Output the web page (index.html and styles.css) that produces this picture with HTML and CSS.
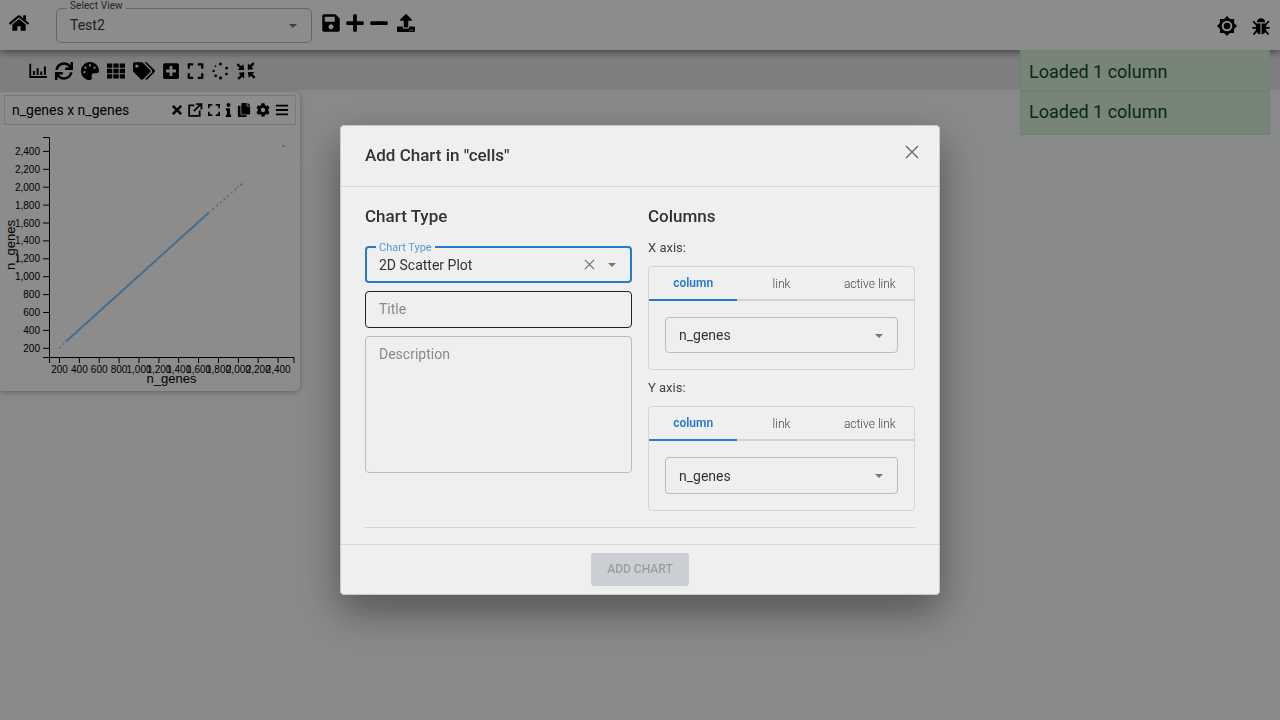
FILE: index.html
```html
<!DOCTYPE html>
<html lang="en">
<head>
<meta charset="utf-8">
<title>Add Chart</title>
<link rel="stylesheet" href="styles.css">
</head>
<body>
<header class="topbar">
  <svg class="icon home" viewBox="0 0 576 512"><path d="M280.37 148.26L96 300.11V464a16 16 0 0 0 16 16l112.06-.29a16 16 0 0 0 15.92-16V368a16 16 0 0 1 16-16h64a16 16 0 0 1 16 16v95.64a16 16 0 0 0 16 16.05L464 480a16 16 0 0 0 16-16V300L295.67 148.26a12.19 12.19 0 0 0-15.3 0zM571.6 251.47L488 182.56V44.05a12 12 0 0 0-12-12h-56a12 12 0 0 0-12 12v72.61L318.47 43a48 48 0 0 0-61 0L4.34 251.47a12 12 0 0 0-1.6 16.9l25.5 31A12 12 0 0 0 45.15 301l235.22-193.74a12.19 12.19 0 0 1 15.3 0L530.9 301a12 12 0 0 0 16.9-1.6l25.5-31a12 12 0 0 0-1.7-16.93z"/></svg>
  <div class="view-select">
    <span class="float-label view-label">Select View</span>
    <span>Test2</span>
    <span class="caret"></span>
  </div>
  <div class="top-actions">
    <svg class="icon" viewBox="0 0 448 512"><path d="M433.941 129.941l-83.882-83.882A48 48 0 0 0 316.118 32H48C21.49 32 0 53.49 0 80v352c0 26.51 21.49 48 48 48h352c26.51 0 48-21.49 48-48V163.882a48 48 0 0 0-14.059-33.941zM224 416c-35.346 0-64-28.654-64-64 0-35.346 28.654-64 64-64s64 28.654 64 64c0 35.346-28.654 64-64 64zm96-304.52V212c0 6.627-5.373 12-12 12H76c-6.627 0-12-5.373-12-12V108c0-6.627 5.373-12 12-12h228.52c3.183 0 6.235 1.264 8.485 3.515l3.48 3.48A11.996 11.996 0 0 1 320 111.48z"/></svg>
    <svg class="icon" viewBox="0 0 448 512"><path d="M416 208H272V64c0-17.67-14.33-32-32-32h-32c-17.67 0-32 14.33-32 32v144H32c-17.67 0-32 14.33-32 32v32c0 17.67 14.33 32 32 32h144v144c0 17.67 14.33 32 32 32h32c17.67 0 32-14.33 32-32V304h144c17.67 0 32-14.33 32-32v-32c0-17.67-14.33-32-32-32z"/></svg>
    <svg class="icon" viewBox="0 0 448 512"><path d="M416 208H32c-17.67 0-32 14.33-32 32v32c0 17.67 14.33 32 32 32h384c17.67 0 32-14.33 32-32v-32c0-17.67-14.33-32-32-32z"/></svg>
    <svg class="icon" viewBox="0 0 512 512"><path d="M296 384h-80c-13.3 0-24-10.7-24-24V192h-87.7c-17.8 0-26.7-21.5-14.1-34.1L242.3 5.7c7.5-7.5 19.8-7.5 27.3 0l152.2 152.2c12.6 12.6 3.7 34.1-14.1 34.1H320v168c0 13.3-10.7 24-24 24zm216-8v112c0 13.3-10.7 24-24 24H24c-13.3 0-24-10.7-24-24V376c0-13.3 10.7-24 24-24h136v8c0 30.9 25.1 56 56 56h80c30.9 0 56-25.1 56-56v-8h136c13.3 0 24 10.7 24 24zm-124 88c0-11-9-20-20-20s-20 9-20 20 9 20 20 20 20-9 20-20zm64 0c0-11-9-20-20-20s-20 9-20 20 9 20 20 20 20-9 20-20z"/></svg>
  </div>
  <div class="top-right">
    <svg class="icon" viewBox="0 0 24 24"><path d="M12 0l3.500 3.500h5v5L24 12l-3.500 3.500v5h-5L12 24l-3.500-3.500h-5v-5L0 12l3.500-3.500v-5h5z"/><circle class="knock" cx="12" cy="12" r="6.400"/><circle cx="12" cy="12" r="4"/></svg>
    <svg class="icon" viewBox="0 0 24 24"><path d="M6.500 7a5.500 5.500 0 0 1 11 0zM5 8.500h6.200V23C7.500 22.800 5 20 5 16.500zM12.800 8.500H19v8c0 3.500-2.500 6.300-6.200 6.500z"/><path class="line" d="M5.500 10L1.500 5.500M18.500 10l4-4.500M5 14.500H.5M19 14.500h4.500M6 18.500l-4 5M18 18.500l4 5"/></svg>
  </div>
</header>

<nav class="toolbar">
  <svg class="icon" viewBox="0 0 512 512"><path d="M10 48h52v352h450v52H10zM112 256h56v112h-56zM216 176h56v192h-56zM320 272h56v96h-56zM424 128h56v240h-56z"/></svg>
  <svg class="icon" viewBox="0 0 512 512"><path d="M440.65 12.57l4 82.77A247.16 247.16 0 0 0 255.83 8C134.73 8 33.91 94.92 12.29 209.82A12 12 0 0 0 24.09 224h49.05a12 12 0 0 0 11.67-9.26 175.91 175.91 0 0 1 317-56.94l-101.46-4.86a12 12 0 0 0-12.57 12v47.41a12 12 0 0 0 12 12H500a12 12 0 0 0 12-12V12a12 12 0 0 0-12-12h-47.37a12 12 0 0 0-11.98 12.57zM255.83 432a175.61 175.61 0 0 1-146-77.8l101.8 4.87a12 12 0 0 0 12.57-12v-47.4a12 12 0 0 0-12-12H12a12 12 0 0 0-12 12V500a12 12 0 0 0 12 12h47.35a12 12 0 0 0 12-12.6l-4.15-82.57A247.17 247.17 0 0 0 255.83 504c121.11 0 221.93-86.92 243.55-201.82a12 12 0 0 0-11.8-14.18h-49.05a12 12 0 0 0-11.67 9.26A175.86 175.86 0 0 1 255.83 432z"/></svg>
  <svg class="icon" viewBox="0 0 512 512"><path d="M204.3 5C104.9 24.4 24.8 104.3 5.2 203.4c-37 187 131.7 326.4 258.8 306.7 41.2-6.4 61.4-54.6 42.5-91.7-23.1-45.4 9.9-98.4 60.9-98.4h79.7c35.8 0 64.8-29.6 64.9-65.3C511.5 97.1 368.1-26.9 204.3 5zM96 320c-17.7 0-32-14.3-32-32s14.3-32 32-32 32 14.3 32 32-14.3 32-32 32zm32-128c-17.7 0-32-14.3-32-32s14.3-32 32-32 32 14.3 32 32-14.3 32-32 32zm128-64c-17.7 0-32-14.3-32-32s14.3-32 32-32 32 14.3 32 32-14.3 32-32 32zm128 64c-17.7 0-32-14.3-32-32s14.3-32 32-32 32 14.3 32 32-14.3 32-32 32z"/></svg>
  <svg class="icon" viewBox="0 0 512 512"><path d="M0 40h150v122H0zM181 40h150v122H181zM362 40h150v122H362zM0 195h150v122H0zM181 195h150v122H181zM362 195h150v122H362zM0 350h150v122H0zM181 350h150v122H181zM362 350h150v122H362z"/></svg>
  <svg class="icon wide" viewBox="0 0 640 512"><path d="M497.941 225.941L286.059 14.059A48 48 0 0 0 252.118 0H48C21.49 0 0 21.49 0 48v204.118a48 48 0 0 0 14.059 33.941l211.882 211.882c18.744 18.745 49.136 18.746 67.882 0l204.118-204.118c18.745-18.745 18.745-49.137 0-67.882zM112 160c-26.51 0-48-21.49-48-48s21.49-48 48-48 48 21.49 48 48-21.49 48-48 48zm513.941 133.823L421.823 497.941c-18.745 18.745-49.137 18.745-67.882 0l-.36-.36L527.64 323.522c16.999-16.999 26.36-39.6 26.36-63.64s-9.362-46.641-26.36-63.64L331.397 0h48.721a48 48 0 0 1 33.941 14.059l211.882 211.882c18.745 18.745 18.745 49.137 0 67.882z"/></svg>
  <svg class="icon sq" viewBox="0 0 448 512"><path d="M400 32H48C21.5 32 0 53.5 0 80v352c0 26.5 21.5 48 48 48h352c26.5 0 48-21.5 48-48V80c0-26.5-21.5-48-48-48zm-32 252c0 6.6-5.4 12-12 12h-92v92c0 6.6-5.4 12-12 12h-56c-6.6 0-12-5.4-12-12v-92H92c-6.6 0-12-5.4-12-12v-56c0-6.6 5.400-12 12-12h92v-92c0-6.6 5.400-12 12-12h56c6.600 0 12 5.400 12 12v92h92c6.600 0 12 5.400 12 12v56z"/></svg>
  <svg class="icon md" viewBox="0 0 448 512"><path d="M0 180V56c0-13.3 10.7-24 24-24h124c6.6 0 12 5.4 12 12v40c0 6.6-5.4 12-12 12H64v84c0 6.6-5.4 12-12 12H12c-6.6 0-12-5.4-12-12zM288 44v40c0 6.6 5.4 12 12 12h84v84c0 6.6 5.4 12 12 12h40c6.6 0 12-5.4 12-12V56c0-13.3-10.7-24-24-24H300c-6.6 0-12 5.4-12 12zm148 276h-40c-6.6 0-12 5.4-12 12v84h-84c-6.6 0-12 5.4-12 12v40c0 6.6 5.4 12 12 12h124c13.3 0 24-10.7 24-24V332c0-6.6-5.4-12-12-12zM160 468v-40c0-6.6-5.4-12-12-12H64v-84c0-6.6-5.4-12-12-12H12c-6.6 0-12 5.4-12 12v124c0 13.3 10.7 24 24 24h124c6.6 0 12-5.4 12-12z"/></svg>
  <svg class="icon md" viewBox="0 0 512 512"><circle cx="256" cy="48" r="46"/><circle cx="440" cy="170" r="40"/><circle cx="436" cy="350" r="44"/><circle cx="256" cy="464" r="48"/><circle cx="110" cy="402" r="42"/><circle cx="48" cy="256" r="36"/><circle cx="104" cy="110" r="28"/></svg>
  <svg class="icon" viewBox="0 0 512 512"><path d="M205 285v190l-58-58-86 88-50-50 88-86-58-58zM307 285h190l-58 58 88 86-50 50-86-88-58 58zM307 227V37l58 58 86-88 50 50-88 86 58 58zM205 227H15l58-58-88-86 50-50 86 88 58-58z"/></svg>
</nav>

<main class="workspace">
  <section class="chart-card">
    <div class="chart-head">
      <span class="chart-name">n_genes x n_genes</span>
      <div class="chart-tools">
        <svg class="mini narrow" viewBox="0 0 352 512"><path d="M242.72 256l100.07-100.07c12.28-12.28 12.28-32.19 0-44.48l-22.24-22.24c-12.28-12.28-32.19-12.28-44.48 0L176 189.28 75.93 89.21c-12.28-12.28-32.19-12.28-44.48 0L9.21 111.45c-12.28 12.28-12.28 32.19 0 44.48L109.28 256 9.21 356.07c-12.28 12.28-12.28 32.19 0 44.48l22.24 22.24c12.28 12.28 32.2 12.28 44.48 0L176 322.72l100.07 100.07c12.28 12.28 32.2 12.28 44.48 0l22.24-22.24c12.28-12.28 12.28-32.19 0-44.48L242.72 256z"/></svg>
        <svg class="mini gap" viewBox="0 0 24 24"><path class="line thick" d="M11 4H2v18h18v-9M10 14L21.500 2.500M14 2h9v9"/></svg>
        <svg class="mini narrow" viewBox="0 0 448 512"><path d="M0 180V56c0-13.3 10.7-24 24-24h124c6.6 0 12 5.4 12 12v40c0 6.6-5.4 12-12 12H64v84c0 6.6-5.4 12-12 12H12c-6.6 0-12-5.4-12-12zM288 44v40c0 6.6 5.4 12 12 12h84v84c0 6.6 5.4 12 12 12h40c6.6 0 12-5.4 12-12V56c0-13.3-10.7-24-24-24H300c-6.6 0-12 5.4-12 12zm148 276h-40c-6.6 0-12 5.4-12 12v84h-84c-6.6 0-12 5.4-12 12v40c0 6.6 5.4 12 12 12h124c13.3 0 24-10.7 24-24V332c0-6.6-5.4-12-12-12zM160 468v-40c0-6.6-5.4-12-12-12H64v-84c0-6.6-5.4-12-12-12H12c-6.6 0-12 5.4-12 12v124c0 13.3 10.7 24 24 24h124c6.6 0 12-5.4 12-12z"/></svg>
        <svg class="mini thin" viewBox="0 0 192 512"><path d="M20 424.229h20V279.771H20c-11.046 0-20-8.954-20-20V212c0-11.046 8.954-20 20-20h112c11.046 0 20 8.954 20 20v212.229h20c11.046 0 20 8.954 20 20V492c0 11.046-8.954 20-20 20H20c-11.046 0-20-8.954-20-20v-47.771c0-11.046 8.954-20 20-20zM96 0C56.235 0 24 32.235 24 72s32.235 72 72 72 72-32.235 72-72S135.764 0 96 0z"/></svg>
        <svg class="mini" viewBox="0 0 448 512"><path d="M320 448v40c0 13.255-10.745 24-24 24H24c-13.255 0-24-10.745-24-24V120c0-13.255 10.745-24 24-24h72v296c0 30.879 25.121 56 56 56h168zm0-344V0H152c-13.255 0-24 10.745-24 24v368c0 13.255 10.745 24 24 24h272c13.255 0 24-10.745 24-24V128H344c-13.2 0-24-10.800-24-24zm120.971-31.029L375.029 7.029A24 24 0 0 0 358.059 0H352v96h96v-6.059a24 24 0 0 0-7.029-16.970z"/></svg>
        <svg class="mini" viewBox="0 0 512 512"><path d="M487.4 315.7l-42.6-24.6c4.3-23.2 4.3-47 0-70.2l42.6-24.6c4.9-2.8 7.1-8.6 5.5-14-11.1-35.6-30-67.8-54.7-94.6-3.8-4.1-10-5.1-14.8-2.3L380.8 110c-17.9-15.4-38.5-27.3-60.8-35.1V25.800c0-5.600-3.900-10.500-9.400-11.700-36.700-8.200-74.300-7.800-109.200 0-5.500 1.200-9.400 6.100-9.400 11.700V75c-22.200 7.900-42.800 19.800-60.800 35.100L88.700 85.500c-4.900-2.800-11-1.900-14.800 2.300-24.700 26.700-43.600 58.900-54.700 94.600-1.700 5.400.6 11.200 5.500 14L67.300 221c-4.300 23.200-4.300 47 0 70.200l-42.600 24.600c-4.900 2.800-7.100 8.600-5.500 14 11.100 35.600 30 67.800 54.700 94.600 3.800 4.100 10 5.100 14.800 2.300l42.600-24.600c17.900 15.400 38.500 27.300 60.800 35.100v49.200c0 5.600 3.900 10.500 9.400 11.700 36.700 8.200 74.300 7.800 109.200 0 5.500-1.200 9.400-6.100 9.400-11.700v-49.200c22.200-7.900 42.800-19.800 60.800-35.100l42.600 24.600c4.900 2.800 11 1.900 14.800-2.300 24.700-26.700 43.600-58.900 54.700-94.600 1.500-5.500-.7-11.300-5.600-14.100zM256 336c-44.100 0-80-35.900-80-80s35.900-80 80-80 80 35.900 80 80-35.900 80-80 80z"/></svg>
        <svg class="mini" viewBox="0 0 448 512"><path d="M16 132h416c8.837 0 16-7.163 16-16V76c0-8.837-7.163-16-16-16H16C7.163 60 0 67.163 0 76v40c0 8.837 7.163 16 16 16zm0 160h416c8.837 0 16-7.163 16-16v-40c0-8.837-7.163-16-16-16H16c-8.837 0-16 7.163-16 16v40c0 8.837 7.163 16 16 16zm0 160h416c8.837 0 16-7.163 16-16v-40c0-8.837-7.163-16-16-16H16c-8.837 0-16 7.163-16 16v40c0 8.837 7.163 16 16 16z"/></svg>
      </div>
    </div>
    <svg class="plot" viewBox="0 126 300 264">
      <path class="axis" d="M43 137.500H49.500V357.500H43M49.500 363V357.500H294V363"/>
      <path class="axis" d="M43 348.300h6M43 330.400h6M43 312.500h6M43 294.600h6M43 276.700h6M43 258.800h6M43 240.900h6M43 223h6M43 205.100h6M43 187.200h6M43 169.300h6M43 151.400h6"/>
      <path class="axis" d="M59.500 357v6M79.400 357v6M99.200 357v6M119.100 357v6M139 357v6M158.900 357v6M178.700 357v6M198.600 357v6M218.500 357v6M238.400 357v6M258.200 357v6M278.100 357v6"/>
      <g class="ytick">
        <text x="40" y="351.800">200</text><text x="40" y="333.900">400</text><text x="40" y="316">600</text><text x="40" y="298.100">800</text><text x="40" y="280.200">1,000</text><text x="40" y="262.300">1,200</text><text x="40" y="244.400">1,400</text><text x="40" y="226.500">1,600</text><text x="40" y="208.600">1,800</text><text x="40" y="190.700">2,000</text><text x="40" y="172.800">2,200</text><text x="40" y="154.900">2,400</text>
      </g>
      <g class="xtick">
        <text x="59.500" y="373">200</text><text x="79.400" y="373">400</text><text x="99.200" y="373">600</text><text x="119.100" y="373">800</text><text x="139" y="373">1,000</text><text x="158.900" y="373">1,200</text><text x="178.700" y="373">1,400</text><text x="198.600" y="373">1,600</text><text x="218.500" y="373">1,800</text><text x="238.400" y="373">2,000</text><text x="258.200" y="373">2,200</text><text x="278.100" y="373">2,400</text>
      </g>
      <text class="axis-title" x="171.500" y="383">n_genes</text>
      <text class="axis-title" transform="translate(15 245) rotate(-90)">n_genes</text>
      <path class="trace" d="M66 341.500L209 212.500"/>
      <path class="trace dotted" d="M59.500 347.500h1.500M63 344h1.500M212.500 209h1.500M216.500 205.500h1.500M220 202.500h1.500M223.500 199.300h2M227 196h1.500M231 192.500h1.500M234.500 189.500h1.500M237 187h1.500M240 184.500h2M282.500 146h2"/>
    </svg>
  </section>
</main>

<aside class="toasts">
  <div class="toast">Loaded 1 column</div>
  <div class="toast">Loaded 1 column</div>
</aside>

<div class="overlay"></div>

<div class="modal-wrap">
  <div class="modal">
    <div class="modal-head">
      <h2 class="modal-title">Add Chart in "cells"</h2>
      <svg class="close" viewBox="0 0 14 14"><path d="M1 1l12 12M13 1L1 13"/></svg>
    </div>
    <div class="modal-body">
      <div class="cols">
        <div class="col">
          <h3 class="section-title">Chart Type</h3>
          <div class="field focused">
            <span class="float-label type-label">Chart Type</span>
            <span class="field-value">2D Scatter Plot</span>
            <svg class="clear" viewBox="0 0 12 12"><path d="M1 1l10 10M11 1L1 11"/></svg>
            <span class="caret"></span>
          </div>
          <div class="field title-field"><span class="placeholder">Title</span></div>
          <div class="field desc-field"><span class="placeholder">Description</span></div>
        </div>
        <div class="col">
          <h3 class="section-title">Columns</h3>
          <div class="axis-label">X axis:</div>
          <div class="tabs-box">
            <div class="tabs"><span class="tab active">column</span><span class="tab">link</span><span class="tab">active link</span></div>
            <div class="tab-panel"><div class="field small"><span class="field-value">n_genes</span><span class="caret"></span></div></div>
          </div>
          <div class="axis-label second">Y axis:</div>
          <div class="tabs-box last">
            <div class="tabs"><span class="tab active">column</span><span class="tab">link</span><span class="tab">active link</span></div>
            <div class="tab-panel"><div class="field small"><span class="field-value">n_genes</span><span class="caret"></span></div></div>
          </div>
        </div>
      </div>
      <hr class="divider">
    </div>
    <div class="modal-foot"><button class="add-btn" disabled>ADD CHART</button></div>
  </div>
</div>
</body>
</html>
```
FILE: styles.css
```css
* { box-sizing: border-box; }
html, body { margin: 0; height: 100%; overflow: hidden; }
body { background: #f8f9fb; font-family: Roboto, "Liberation Sans", sans-serif; color: #000; font-size: 14px; }

.icon { width: 18px; height: 18px; display: block; fill: #000; flex: none; overflow: visible; }
.icon .knock { fill: #fff; }
.line { fill: none; stroke: #000; stroke-width: 2.2; }
.line.thick { stroke-width: 3.2; }

.topbar { position: relative; z-index: 2; height: 50px; background: #fff; display: flex; align-items: center; padding: 0 10px 4px 9px; box-shadow: 0 2px 8px rgba(0,0,0,.5); }
.icon.home { width: 20px; height: 18px; }
.view-select { position: relative; width: 256px; height: 35px; margin: 4px 0 0 27px; border: 1px solid #bbb; border-radius: 5px; display: flex; align-items: center; justify-content: space-between; padding: 0 14px 0 13px; color: #3a3a3a; }
.float-label { position: absolute; background: #fff; padding: 0 3px; font-size: 10px; line-height: 10px; }
.view-label { left: 10px; top: -8px; color: #444; letter-spacing: .1px; }
.caret { width: 0; height: 0; border-left: 4.5px solid transparent; border-right: 4.5px solid transparent; border-top: 4.5px solid #777; flex: none; margin: 1px 0 0; }
.top-actions { display: flex; align-items: center; gap: 6px; margin-left: 10px; }
.top-actions .icon { height: 20px; }
.top-actions .icon:last-child { margin-left: 3px; }
.top-right { display: flex; align-items: center; gap: 15px; margin: 6px 0 0 auto; }
.top-right .icon { width: 20px; height: 20px; }
.top-right .icon:last-child { width: 18px; height: 18px; }

.toolbar { height: 40px; background: #e6e7ea; display: flex; align-items: center; gap: 8px; padding: 2px 25px 0 29px; }
.icon.wide { width: 22px; }
.icon.sq { width: 16px; }
.icon.md { width: 17px; }

.workspace { padding: 2px 0 0; }
.chart-card { width: 300px; height: 299px; background: #fff; border-radius: 0 6px 6px 0; box-shadow: 0 1px 5px rgba(0,0,0,.3); padding-top: 3px; }
.chart-head { height: 30px; margin: 0 4px 1px; border: 1px solid #ddd; display: flex; align-items: center; justify-content: space-between; padding: 0 6px 0 7px; }
.chart-name { font-size: 14px; }
.chart-tools { display: flex; align-items: center; gap: 5px; }
.mini { width: 14px; height: 14px; display: block; fill: #000; overflow: visible; }
.mini.narrow { width: 12px; }
.mini.thin { width: 7px; }
.mini.gap { margin-right: 1px; }
.plot { display: block; width: 300px; height: 264px; font-family: "Liberation Sans", Arial, sans-serif; }
.axis { fill: none; stroke: #000; stroke-width: 1; }
.ytick text { font-size: 10px; text-anchor: end; }
.xtick text { font-size: 10px; text-anchor: middle; }
.axis-title { font-size: 13px; text-anchor: middle; }
.trace { fill: none; stroke: #80c8ff; stroke-width: 2; }
.trace.dotted { stroke-width: 2; }

.toasts { position: absolute; z-index: 3; top: 50px; right: 10px; width: 250px; }
.toast { height: 41px; display: flex; align-items: center; padding: 2px 8px 0; background: #d9f0da; border: 1px solid #cfe8d2; font-size: 18px; color: #0f4f20; }
.toast + .toast { height: 44px; padding: 0 8px 3px; }

.overlay { position: fixed; inset: 0; z-index: 10; background: rgba(0,0,0,.45); }
.modal-wrap { position: fixed; inset: 0; z-index: 11; display: flex; align-items: center; justify-content: center; }
.modal { width: 600px; height: 470px; background: #efefef; border: 1px solid #c8c8c8; border-radius: 4px; box-shadow: 0 16px 40px rgba(0,0,0,.4); color: #333; display: flex; flex-direction: column; }
.modal-head { height: 61px; flex: none; display: flex; align-items: center; justify-content: space-between; padding: 0 20px 2px 24px; border-bottom: 1px solid #d6d6d6; }
.modal-title { margin: 0; font-size: 17px; font-weight: 500; color: #333; }
.close { width: 14px; height: 14px; margin-bottom: 6px; fill: none; stroke: #666; stroke-width: 1.4; }
.modal-body { flex: 1; padding: 0 24px; display: flex; flex-direction: column; }
.cols { display: flex; gap: 16px; flex: 1; }
.col { width: 267px; display: flex; flex-direction: column; }
.section-title { margin: 18px 0 0; font-size: 17px; line-height: 22px; font-weight: 500; color: #333; }
.field { position: relative; display: flex; align-items: center; border: 1px solid #bcbcbc; border-radius: 4px; padding: 0 14px 0 13px; font-size: 14px; }
.field.focused { margin-top: 19px; height: 37px; border: 2px solid #2a78cc; padding: 0 14px 0 12px; }
.type-label { left: 9px; top: -5px; background: #efefef; color: #5c97d6; font-size: 11px; }
.field-value { flex: 1; color: #333; }
.clear { width: 11px; height: 11px; margin-right: 13px; fill: none; stroke: #666; stroke-width: 1.2; }
.title-field { margin-top: 8px; height: 37px; border-color: #222; padding-bottom: 2px; }
.desc-field { margin-top: 8px; height: 137px; align-items: flex-start; padding-top: 9px; }
.placeholder { color: #8a8a8a; }
.axis-label { margin-top: 13px; height: 26px; font-size: 13px; line-height: 16px; color: #444; }
.axis-label.second { margin-top: 10px; height: 26px; }
.tabs-box { height: 104px; border: 1px solid #d4d4d4; border-radius: 4px; }
.tabs-box.last { height: 105px; }
.tabs { display: flex; height: 34px; border-bottom: 2px solid #d4d4d4; }
.tab { flex: 1; display: flex; align-items: center; justify-content: center; font-size: 12px; font-weight: 300; color: #444; height: 34px; }
.tab.active { color: #2a78cc; font-weight: 600; border-bottom: 2px solid #2a78cc; }
.tab-panel { padding: 16px; }
.field.small { height: 36px; }
.last .field.small { height: 37px; }
.divider { width: 100%; margin: 0 0 16px; border: 0; border-top: 1px solid #d4d4d4; }
.modal-foot { height: 50px; flex: none; display: flex; justify-content: center; padding-top: 8px; border-top: 1px solid #d6d6d6; }
.add-btn { width: 98px; height: 33px; border: 0; border-radius: 3px; padding: 0 0 2px; background: #cbced3; color: #9a9da2; font: 500 12px Roboto, sans-serif; }
```
